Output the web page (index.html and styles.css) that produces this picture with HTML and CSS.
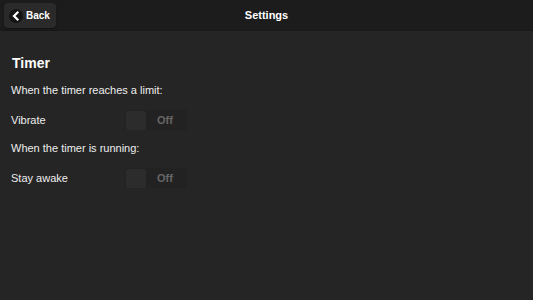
FILE: index.html
```html
<!DOCTYPE html>
<html>
<head>
<meta charset="utf-8">
<link rel="stylesheet" href="styles.css">
</head>
<body>
<div class="page">
  <header class="header">
    <button class="back">
      <span class="back-icon">
        <svg width="12" height="12" viewBox="0 0 12 12"><path d="M7.5 2.5 L4 6 L7.5 9.5" fill="none" stroke="#fff" stroke-width="2.2" stroke-linecap="square"/></svg>
      </span>
      <span class="back-label">Back</span>
    </button>
    <h1 class="title">Settings</h1>
  </header>
  <main class="content">
    <h2 class="section">Timer</h2>
    <p class="label">When the timer reaches a limit:</p>
    <div class="row">
      <span class="row-label">Vibrate</span>
      <div class="switch"><span class="thumb"></span><span class="state">Off</span></div>
    </div>
    <p class="label">When the timer is running:</p>
    <div class="row">
      <span class="row-label">Stay awake</span>
      <div class="switch"><span class="thumb"></span><span class="state">Off</span></div>
    </div>
  </main>
</div>
</body>
</html>
```
FILE: styles.css
```css
html, body { margin: 0; padding: 0; height: 100%; }
body {
  background: #252525;
  font-family: "Liberation Sans", Arial, sans-serif;
  color: #fff;
}
.page { height: 300px; display: flex; flex-direction: column; }
.header {
  position: relative;
  height: 30px;
  background: #1c1c1c;
  border-bottom: 1px solid #191919;
  display: flex;
  align-items: center;
  justify-content: center;
}
.back {
  position: absolute;
  left: 4px;
  top: 3px;
  height: 25px;
  width: 52px;
  padding: 0 0 0 5px;
  border: none;
  border-radius: 4px;
  background: #2a2a2a;
  box-shadow: 0 1px 2px rgba(0,0,0,.4);
  display: flex;
  align-items: center;
  gap: 3px;
  font-family: inherit;
  cursor: pointer;
}
.back-icon {
  width: 14px; height: 14px;
  border-radius: 50%;
  background: #141414;
  display: flex; align-items: center; justify-content: center;
}
.back-label { color: #fff; font-size: 10px; font-weight: bold; }
.title { margin: 0; font-size: 11px; font-weight: bold; color: #fff; }
.content { padding: 9px 12px 0 11px; }
.section { margin: 15px 0 0 1px; font-size: 14px; font-weight: bold; line-height: 16px; }
.label { margin: 12px 0 0 0; font-size: 11px; line-height: 14px; color: #eee; }
.row { display: flex; align-items: center; margin-top: 12px; height: 22px; }
.row-label { width: 114px; font-size: 11px; color: #eee; }
.switch {
  width: 62px; height: 20px;
  background: #222;
  border-radius: 3px;
  display: flex; align-items: center;
}
.thumb { width: 20px; height: 19px; background: #2c2c2c; border-radius: 2px; margin-left: 1px; }
.state { margin-left: 11px; font-size: 11px; font-weight: bold; color: #666; }
.row + .label { margin-top: 10px; }
```
